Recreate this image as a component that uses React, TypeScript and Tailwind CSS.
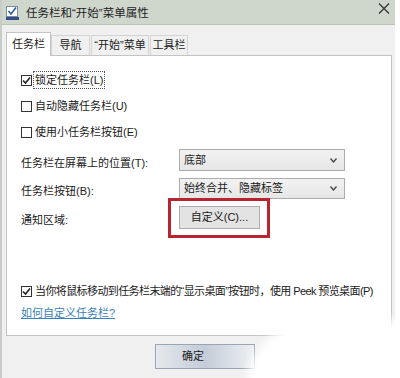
const font = { fontFamily: '"Liberation Sans", "Noto Sans CJK SC", sans-serif' };

const tabs = [
    { label: '任务栏', w: 'w-[45px]', active: true },
    { label: '导航', w: 'w-[39px]' },
    { label: '“开始”菜单', w: 'w-[58px]' },
    { label: '工具栏', w: 'w-[38px]' },
];

function Checkbox({ checked }: { checked?: boolean }) {
    return (
        <span className="w-[11px] h-[11px] border border-[#333333] bg-white flex items-center justify-center shrink-0">
            {checked && (
                <svg width="9" height="9" viewBox="0 0 9 9">
                    <path d="M1 4.5 L3.5 7 L8 1.5" fill="none" stroke="#222" strokeWidth="1.6" />
                </svg>
            )}
        </span>
    );
}

function Select({ value }: { value: string }) {
    return (
        <div className="w-[166px] h-full border border-[#acacac] bg-gradient-to-b from-[#f2f2f2] to-[#e6e6e6] flex items-center pl-[4px] pr-[7px]">
            <span className="flex-1">{value}</span>
            <svg width="7" height="5" viewBox="0 0 7 5">
                <path d="M0.5 0.5 L3.5 4 L6.5 0.5" fill="none" stroke="#444" strokeWidth="1.3" />
            </svg>
        </div>
    );
}

export default function App() {
    return (
        <div className="w-[400px] h-[378px] bg-white relative overflow-hidden text-[11px] text-[#1a1a1a]" style={font}>
            <div className="w-[395px] h-full bg-[#f0f0f0] border-l-2 border-[#c9cdc8] flex flex-col">
                <div className="h-[25px] bg-[#cfd7cd] border-b border-[#bcc4ba] flex items-start shrink-0">
                    <svg width="13" height="14" viewBox="0 0 13 14" className="ml-[4px] mt-[6px]">
                        <rect x="0.5" y="0.5" width="11" height="10" fill="#fff" stroke="#7d8a9c" />
                        <path d="M2.5 5 L5 8 L10 1.5" fill="none" stroke="#2d5f9e" strokeWidth="1.6" />
                        <rect x="0" y="11" width="13" height="3" fill="#34508a" />
                    </svg>
                    <span className="ml-[7px] mt-[5px] text-[11.5px] text-[#222]">任务栏和“开始”菜单属性</span>
                    <svg width="12" height="11" viewBox="0 0 12 11" className="ml-auto mr-[5px] mt-[3px]">
                        <path d="M1 0.5 L11 10.5 M11 0.5 L1 10.5" stroke="#333" strokeWidth="1.2" />
                    </svg>
                </div>

                <div className="pl-[4px] pr-[3px] pt-[7px]">
                    <div className="flex items-end h-[23px]">
                        {tabs.map((t) =>
                            t.active ? (
                                <div
                                    key={t.label}
                                    className={`${t.w} h-[24px] -mb-px z-10 bg-white border border-b-0 border-[#c4c4c4] flex items-center justify-center`}
                                >
                                    {t.label}
                                </div>
                            ) : (
                                <div
                                    key={t.label}
                                    className={`${t.w} h-[20px] mr-[1px] bg-[#f0f0f0] border border-b-0 border-[#d4d4d4] flex items-center justify-center`}
                                >
                                    {t.label}
                                </div>
                            )
                        )}
                    </div>

                    <div className="h-[281px] bg-white border border-[#c4c4c4] pl-[14px] pt-[11px] flex flex-col">
                        <div className="h-[26px] flex items-center">
                            <Checkbox checked />
                            <span className="ml-[1px] px-[1px] border border-dotted border-[#555]">锁定任务栏(L)</span>
                        </div>
                        <div className="h-[26px] flex items-center">
                            <Checkbox />
                            <span className="ml-[3px]">自动隐藏任务栏(U)</span>
                        </div>
                        <div className="h-[26px] flex items-center">
                            <Checkbox />
                            <span className="ml-[3px]">使用小任务栏按钮(E)</span>
                        </div>

                        <div className="mt-[4px] h-[22px] flex items-center">
                            <span className="w-[158px] mt-[6px]">任务栏在屏幕上的位置(T):</span>
                            <Select value="底部" />
                        </div>
                        <div className="mt-[7px] h-[21px] flex items-center">
                            <span className="w-[158px] mt-[6px]">任务栏按钮(B):</span>
                            <Select value="始终合并、隐藏标签" />
                        </div>
                        <div className="mt-[7px] h-[23px] flex items-center">
                            <span className="w-[158px] mt-[5px]">通知区域:</span>
                            <div className="w-[81px] h-full bg-[#e3e3e3] border border-[#adadad] flex items-center justify-center">
                                自定义(C)...
                            </div>
                        </div>

                        <div className="mt-[49px] h-[26px] flex items-center">
                            <Checkbox checked />
                            <span className="ml-[3px] tracking-[-0.6px]">
                                当你将鼠标移动到任务栏末端的“显示桌面”按钮时，使用 Peek 预览桌面(P)
                            </span>
                        </div>
                        <div className="h-[18px] flex items-center">
                            <span className="text-[#3b7fb8] underline">如何自定义任务栏?</span>
                        </div>
                    </div>
                </div>

                <div className="flex pl-[153px] pt-[8px]">
                    <div className="w-[100px] h-[25px] border border-[#9aa6b6] bg-gradient-to-r from-[#e6e9ed] via-[#c3ccd8] to-[#eef1f4] flex items-center pl-[26px]">
                        确定
                    </div>
                </div>
            </div>

            <div className="absolute left-[246px] top-[320px] w-[190px] h-[80px] bg-white rounded-tl-[70px] blur-[5px]" />
            <div className="absolute left-[168px] top-[198px] w-[102px] h-[40px] border-[3px] border-[#b8242f]" />
        </div>
    );
}
